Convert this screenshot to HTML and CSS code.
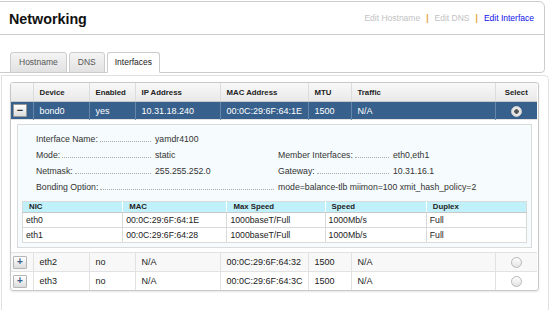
FILE: index.html
```html
<!DOCTYPE html>
<html lang="en">
<head>
  <meta charset="UTF-8" />
  <title>Networking</title>
  <link rel="stylesheet" href="styles.css">
</head>
<body>

  <div class="head">
    <div class="title-row">
      <h1>Networking</h1>
      <div class="links">
        <a class="off">Edit Hostname</a>
        <span class="sep">|</span>
        <a class="off">Edit DNS</a>
        <span class="sep">|</span>
        <a class="on">Edit Interface</a>
      </div>
    </div>
    <div class="tabs">
      <span class="tab">Hostname</span>
      <span class="tab">DNS</span>
      <span class="tab active">Interfaces</span>
    </div>
  </div>

  <div class="content">
    <div class="grid-wrap">
      <table class="grid">
        <colgroup>
          <col style="width:22px"><col style="width:56px"><col style="width:46px"><col style="width:85px">
          <col style="width:88px"><col style="width:43px"><col style="width:144px"><col style="width:42px">
        </colgroup>
        <thead>
          <tr>
            <th></th><th>Device</th><th>Enabled</th><th>IP Address</th>
            <th>MAC Address</th><th>MTU</th><th>Traffic</th><th class="sel">Select</th>
          </tr>
        </thead>
        <tbody>
          <tr class="row current">
            <td class="tog"><span class="btn">&minus;</span></td>
            <td>bond0</td><td>yes</td><td>10.31.18.240</td><td>00:0C:29:6F:64:1E</td>
            <td>1500</td><td>N/A</td><td class="sel"><span class="radio on"></span></td>
          </tr>
          <tr class="detail">
            <td colspan="8">
              <div class="info-box">
                <div class="info">
                  <div class="field"><span class="key">Interface Name:</span><span>yamdr4100</span></div>
                  <div></div>
                  <div class="field"><span class="key">Mode:</span><span>static</span></div>
                  <div class="field"><span class="key r">Member Interfaces:</span><span>eth0,eth1</span></div>
                  <div class="field"><span class="key">Netmask:</span><span>255.255.252.0</span></div>
                  <div class="field"><span class="key r">Gateway:</span><span>10.31.16.1</span></div>
                  <div class="field wide"><span class="key w">Bonding Option:</span><span>mode=balance-tlb miimon=100 xmit_hash_policy=2</span></div>
                </div>
                <table class="nics">
                  <colgroup>
                    <col style="width:100px"><col style="width:104px"><col style="width:98px"><col style="width:101px"><col style="width:100px">
                  </colgroup>
                  <tr><th>NIC</th><th>MAC</th><th>Max Speed</th><th>Speed</th><th>Duplex</th></tr>
                  <tr><td>eth0</td><td>00:0C:29:6F:64:1E</td><td>1000baseT/Full</td><td>1000Mb/s</td><td>Full</td></tr>
                  <tr><td>eth1</td><td>00:0C:29:6F:64:28</td><td>1000baseT/Full</td><td>1000Mb/s</td><td>Full</td></tr>
                </table>
              </div>
            </td>
          </tr>
          <tr class="row alt">
            <td class="tog"><span class="btn plus">+</span></td>
            <td>eth2</td><td>no</td><td>N/A</td><td>00:0C:29:6F:64:32</td>
            <td>1500</td><td>N/A</td><td class="sel"><span class="radio"></span></td>
          </tr>
          <tr class="row">
            <td class="tog"><span class="btn plus">+</span></td>
            <td>eth3</td><td>no</td><td>N/A</td><td>00:0C:29:6F:64:3C</td>
            <td>1500</td><td>N/A</td><td class="sel"><span class="radio"></span></td>
          </tr>
        </tbody>
      </table>
    </div>
  </div>

</body>
</html>
```

FILE: styles.css
```css
body {
  font-family: "Liberation Sans", Arial, sans-serif;
  font-size: 8.7px;
  color: #222;
  background: #fff;
  margin: 0;
  padding: 0;
}
.head {
  margin: 1px 5px 0 -1px;
  border: 1px solid #ccc;
  border-radius: 0 6px 4px 0;
}
.title-row {
  height: 32px;
  display: flex;
  align-items: center;
  justify-content: space-between;
  padding: 0 10px 0 9px;
  border-bottom: 1px solid #ccc;
}
h1 {
  margin: 2px 0 0 0;
  font-size: 14.3px;
  font-weight: bold;
  color: #111;
}
.links {
  display: flex;
  align-items: center;
  gap: 6px;
  font-size: 8.5px;
}
.links a.off {
  color: #c2c2c2;
}
.links a.on {
  color: #1010e8;
}
.sep {
  color: #e8a23a;
  font-weight: bold;
}
.tabs {
  display: flex;
  gap: 2px;
  padding: 17px 0 0 10px;
  margin-bottom: -1px;
}
.tab {
  height: 19px;
  line-height: 19px;
  padding: 0 8px;
  font-size: 8.5px;
  border: 1px solid #ccc;
  border-radius: 3px 3px 0 0;
  background: linear-gradient(#f4f4f4, #e2e2e2);
  color: #555;
}
.tab.active {
  padding: 0 7px;
  background: #fff;
  border-bottom-color: #fff;
  color: #222;
}
.content {
  margin: 2px 1px 0 1px;
  border: 1px solid #e0e0e0;
  border-bottom: none;
  border-radius: 0 5px 0 0;
  padding: 6px 9px 20px 8px;
}
.grid-wrap {
  border: 1px solid #c8c8c8;
  border-radius: 3px;
  overflow: hidden;
  box-shadow: 0 1px 2px rgba(0,0,0,0.1);
}
.grid {
  width: 526px;
  table-layout: fixed;
  border-collapse: collapse;
}
.grid th {
  height: 18px;
  padding: 0 6px;
  text-align: left;
  font-size: 7.8px;
  font-weight: bold;
  background: linear-gradient(#f8f8f8, #e9e9e9);
  border-bottom: 1px solid #c8c8c8;
  border-left: 1px solid #dcdcdc;
}
.grid th:first-child {
  border-left: none;
}
.grid th.sel {
  text-align: center;
}
.grid .row td {
  height: 18px;
  line-height: 12px;
  padding: 0 6px;
  font-size: 9px;
  border-left: 1px solid #e2e2e2;
  border-top: 1px solid #e2e2e2;
  white-space: nowrap;
}
.grid .row td:first-child {
  border-left: none;
}
.grid .row.alt td {
  background: #f8f8f8;
}
.grid .row.current td {
  height: 17px;
  background: #37618c;
  color: #fff;
  border-top: none;
  border-left-color: #6787aa;
}
.grid td.tog {
  padding: 0 0 0 2px;
}
.grid td.sel {
  text-align: center;
}
.btn {
  display: inline-block;
  width: 12px;
  height: 11px;
  line-height: 10px;
  text-align: center;
  font-size: 11px;
  font-weight: bold;
  color: #333;
  background: linear-gradient(#fff, #dcdcdc);
  border: 1px solid #999;
  border-radius: 1px;
  vertical-align: middle;
}
.btn.plus {
  font-size: 10px;
  color: #3a5f8a;
  border-color: #b5b5b5;
}
.radio {
  display: inline-block;
  width: 9px;
  height: 9px;
  border-radius: 50%;
  border: 1px solid #b8b8b8;
  background: linear-gradient(#fdfdfd, #e4e4e4);
  vertical-align: middle;
}
.radio.on {
  border-color: #ccc;
  background: radial-gradient(circle, #555 0 2px, #e8e8e8 2.5px);
}
.detail td {
  padding: 4px 5px 4px 6px;
  border-top: 1px solid #e2e2e2;
}
.info-box {
  background: #f6fbfd;
  border: 1px solid #dadada;
  padding: 6px 4px 4px 4px;
}
.info {
  display: grid;
  grid-template-columns: 242px 1fr;
  grid-auto-rows: 16px;
  margin-left: 14px;
  color: #333;
}
.field {
  display: flex;
  align-items: center;
}
.field.wide {
  grid-column: 1 / 3;
}
.key {
  display: flex;
  width: 119px;
  flex: none;
}
.key.r {
  width: 115px;
}
.key.w {
  width: 242px;
}
.key::after {
  content: '';
  flex: 1;
  border-bottom: 1px dotted #aaa;
  margin: 0 4px 2px 2px;
}
.nics {
  margin-top: 6px;
  width: 505px;
  table-layout: fixed;
  border-collapse: collapse;
  border: 1px solid #dadada;
  background: #fff;
}
.nics th {
  height: 10px;
  line-height: 10px;
  padding: 0 6px;
  text-align: left;
  font-size: 7.8px;
  font-weight: bold;
  background: #c0f1fb;
  border-left: 1px solid #fff;
}
.nics td {
  height: 14px;
  line-height: 11px;
  padding: 0 3px;
  font-size: 8.7px;
  border: 1px solid #dadada;
  white-space: nowrap;
}
```
